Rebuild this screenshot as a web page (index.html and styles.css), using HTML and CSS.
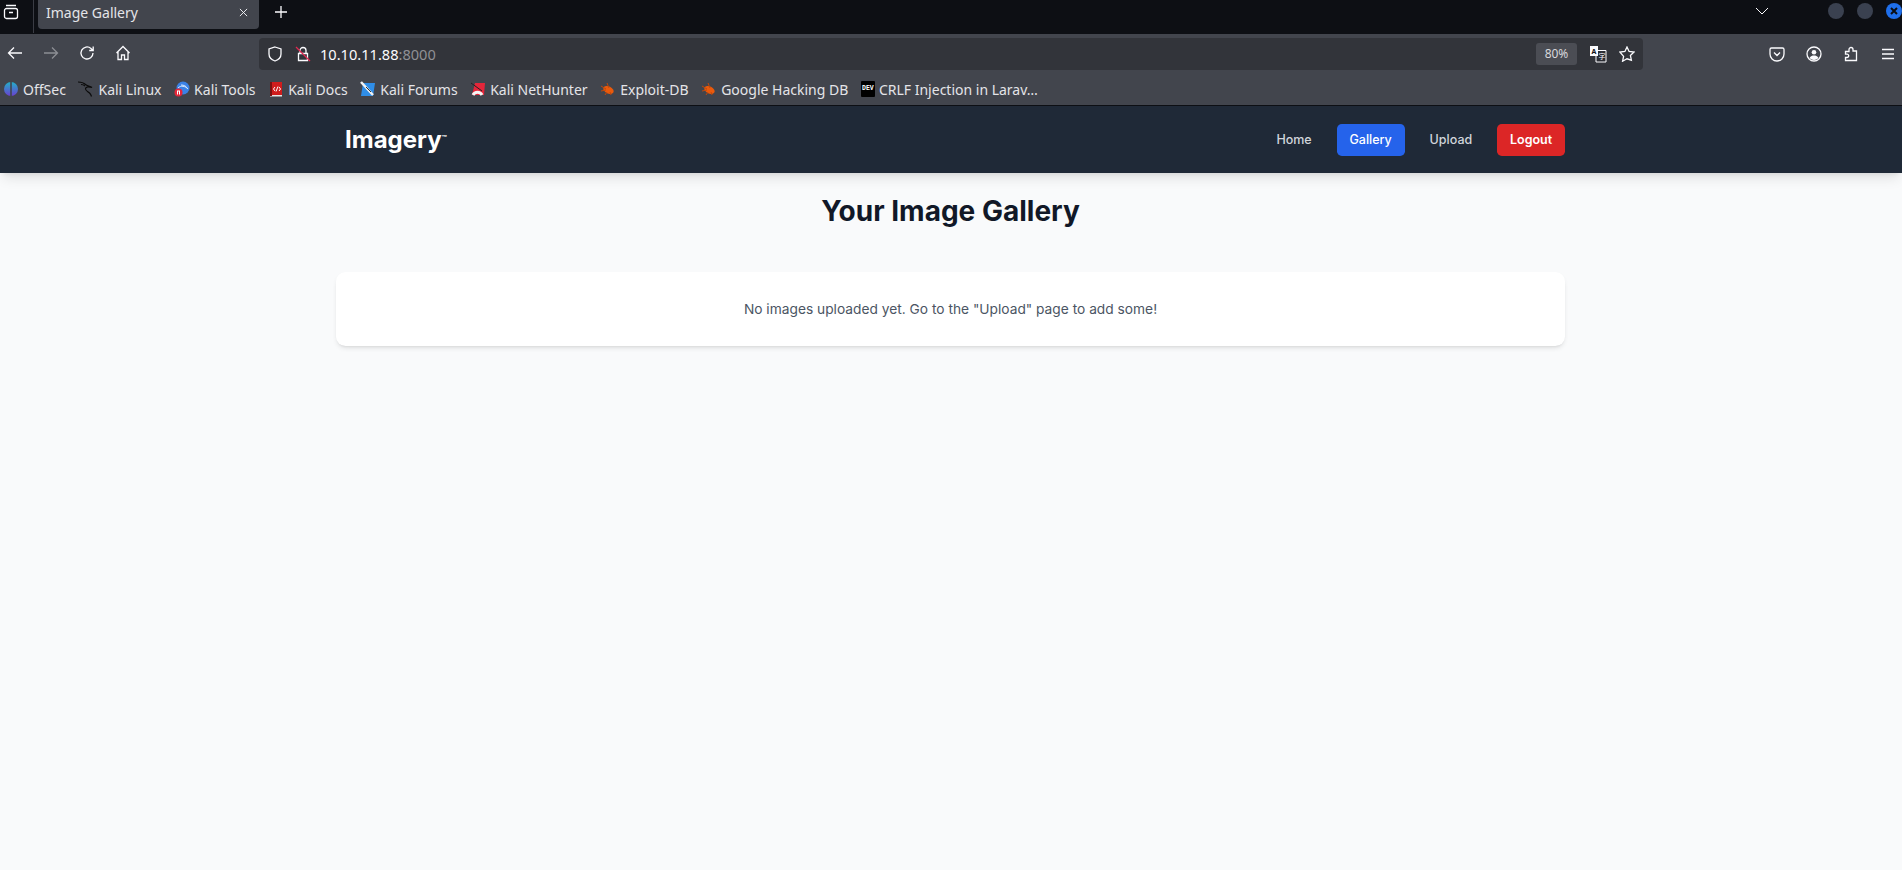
FILE: index.html
```html
<!DOCTYPE html>
<html>
  <head>
    <title>Image Gallery</title>
    <link rel="stylesheet" href="styles.css">
  </head>
  <body>
    <!-- Browser tab strip -->
    <div class="tabstrip">
      <svg class="ico tabs-btn" width="16" height="16" viewBox="0 0 16 16"><path d="M3 1.500h10M1.500 6.500a2 2 0 0 1 2-2h9a2 2 0 0 1 2 2v6a2 2 0 0 1-2 2h-9a2 2 0 0 1-2-2zM6 8.500h4"/></svg>
      <div class="tab-sep"></div>
      <div class="tab">
        <span class="tab-title">Image Gallery</span>
        <svg class="ico thin" width="9" height="9" viewBox="0 0 10 10"><path d="M1 1l8 8M9 1l-8 8"/></svg>
      </div>
      <svg class="ico new-tab" width="12" height="12" viewBox="0 0 12 12"><path d="M6 0v12M0 6h12"/></svg>
      <svg class="ico thin tab-list" width="14" height="8" viewBox="0 0 14 8"><path d="M1 1l6 6 6-6"/></svg>
      <span class="win-btn"></span>
      <span class="win-btn"></span>
      <span class="win-btn close">
        <svg class="win-x" width="8" height="8" viewBox="0 0 8 8"><path d="M1 1l6 6M7 1L1 7"/></svg>
      </span>
    </div>

    <!-- Browser toolbar -->
    <div class="toolbar">
      <svg class="ico nav-ico" width="16" height="16" viewBox="0 0 16 16"><path d="M15 8H1.500M7 2.500L1.500 8 7 13.500"/></svg>
      <svg class="ico nav-ico off" width="16" height="16" viewBox="0 0 16 16"><path d="M1 8h13.500M9 2.500L14.500 8 9 13.500"/></svg>
      <svg class="ico nav-ico" width="16" height="16" viewBox="0 0 16 16"><path d="M14 8a6 6 0 1 1-2-4.500L14 5.500M14.200 1.500v4h-4"/></svg>
      <svg class="ico nav-ico" width="16" height="16" viewBox="0 0 16 16"><path d="M1.500 8L8 1.500 14.500 8M3 7v7.500h3.500V10h3v4.500H13V7"/></svg>
      <div class="urlbar">
        <svg class="ico" width="16" height="16" viewBox="0 0 16 16"><path d="M8 1l6 2v5c0 3.500-3 6-6 7-3-1-6-3.500-6-7V3z"/></svg>
        <svg class="lock" width="16" height="16" viewBox="0 0 16 16"><path class="lock-body" d="M5 7V4.500a3 3 0 0 1 6 0V7M3.500 7.500h9v7h-9z"/><path class="lock-slash" d="M1 1l14 14"/></svg>
        <span class="url">10.10.11.88<span class="url-port">:8000</span></span>
        <span class="zoom-badge">80%</span>
        <svg width="18" height="18" viewBox="0 0 18 18" class="translate"><path d="M7 5.500h10V17H7z" fill="#2b2d33" stroke="#fbfbfe"/><path d="M1 1h8v10H1z" fill="#fbfbfe"/><text x="2.500" y="8.500" class="tr-a">A</text><text x="9.500" y="14" class="tr-b">字</text></svg>
        <svg class="ico" width="16" height="16" viewBox="0 0 16 16"><path d="M8 1l2.100 4.500 4.900.6-3.600 3.300 1 4.800L8 12.800l-4.400 2.400 1-4.800L1 6.100l4.900-.6z"/></svg>
      </div>
      <div class="tool-icons">
        <svg class="ico" width="16" height="16" viewBox="0 0 16 16"><path d="M2.500 2h11A1.500 1.500 0 0 1 15 3.500V8a7 7 0 0 1-14 0V3.500A1.500 1.500 0 0 1 2.500 2zM5 6.500l3 3 3-3"/></svg>
        <svg class="ico" width="16" height="16" viewBox="0 0 16 16"><circle cx="8" cy="8" r="7"/><circle class="solid" cx="8" cy="6.300" r="2.300"/><path class="solid" d="M3.500 12c1-2 3-2.500 4.500-2.500s3.500.5 4.500 2.500c-1.200 1.200-2.800 2-4.500 2s-3.300-.8-4.500-2z"/></svg>
        <svg class="ico" width="16" height="16" viewBox="0 0 16 16"><path d="M2.500 5.500h3.500V3.500a2 2 0 0 1 4 0v1.500h3.500v9.500h-11v-3h1.500a1.700 1.700 0 0 0 0-3.400H2.500z"/></svg>
        <svg class="ico" width="16" height="16" viewBox="0 0 16 16"><path d="M2 3.500h12M2 8h12M2 12.500h12"/></svg>
      </div>
    </div>

    <!-- Bookmarks toolbar -->
    <div class="bookmarks">
      <a class="bm">
        <svg width="16" height="16" viewBox="0 0 16 16"><defs><linearGradient id="offsec" x1="0" y1="0" x2="0" y2="1"><stop offset="0" stop-color="#22b0c8"/><stop offset="1" stop-color="#6a3fd0"/></linearGradient></defs><circle cx="8" cy="8" r="7" fill="url(#offsec)"/><path d="M7.200 1h1.600v14H7.200z" fill="#42454d"/></svg>
        OffSec
      </a>
      <a class="bm">
        <svg width="16" height="16" viewBox="0 0 16 16" fill="none" stroke="#0b0b0b" stroke-width="1.200"><path d="M0 1c3 0 6 1 7.500 2.500S12 5 14 6.500c-3-1-6-1-6.500 1s2.500 3 4 4.500 1.500 2 2 3.500"/><path d="M3 3.500c1.500 0 3 .5 4 1.500"/></svg>
        Kali Linux
      </a>
      <a class="bm">
        <svg width="16" height="16" viewBox="0 0 16 16"><circle cx="9" cy="7" r="6.500" fill="#3b82e6"/><path d="M4 7c3-3 7-2 10 1M7 4c3 0 5 1 6 3" fill="none" stroke="#dbeafe"/><circle cx="4.500" cy="11.500" r="4" fill="#e5263a"/><path d="M3 10h3M3.500 10v3.500M5.500 10v3.500" stroke="#fff"/></svg>
        Kali Tools
      </a>
      <a class="bm">
        <svg width="16" height="16" viewBox="0 0 16 16"><path d="M2 1h12v13H2z" fill="#d01c1c"/><path d="M2 14h12v1.500H2z" fill="#e5e5e5"/><path d="M2 1h2v14H2z" fill="#7a1010"/><path d="M7 6L5.500 8 7 10M11 6l1.500 2L11 10M10 5.500L8 10.500" stroke="#fff" fill="none"/></svg>
        Kali Docs
      </a>
      <a class="bm">
        <svg width="16" height="16" viewBox="0 0 16 16"><path d="M3 2h12l-2 13H1z" fill="#2f8ee8"/><path d="M1 1l12 13" stroke="#f2f2f2" stroke-width="2.500"/><path d="M6 6l5 5" stroke="#333"/></svg>
        Kali Forums
      </a>
      <a class="bm">
        <svg width="16" height="16" viewBox="0 0 16 16"><path d="M5 2h10l-1 12H2z" fill="#e5263a"/><path d="M3 14a5 5 0 0 1 9 0" fill="none" stroke="#f5f5f5" stroke-width="3"/><path d="M1 2l11 8" stroke="#222"/></svg>
        Kali NetHunter
      </a>
      <a class="bm">
        <svg width="16" height="16" viewBox="0 0 16 16"><ellipse cx="8.500" cy="9" rx="5.500" ry="3.500" fill="#ea5a0c" transform="rotate(25 8.500 9)"/><path d="M1 5l5 3M7 2l2 5M1 10l5-1M5 14l2-3M11 14l-1-3" stroke="#c2480a"/></svg>
        Exploit-DB
      </a>
      <a class="bm">
        <svg width="16" height="16" viewBox="0 0 16 16"><ellipse cx="8.500" cy="9" rx="5.500" ry="3.500" fill="#ea5a0c" transform="rotate(25 8.500 9)"/><path d="M1 5l5 3M7 2l2 5M1 10l5-1M5 14l2-3M11 14l-1-3" stroke="#c2480a"/></svg>
        Google Hacking DB
      </a>
      <a class="bm">
        <span class="dev-ico">DEV</span>
        CRLF Injection in Larav…
      </a>
    </div>

    <!-- Site header -->
    <header class="site-header">
      <div class="wrap header-row">
        <div class="brand">Imagery<span class="tm">™</span></div>
        <nav class="site-nav">
          <a class="nav-link">Home</a>
          <a class="nav-link active">Gallery</a>
          <a class="nav-link">Upload</a>
          <a class="nav-link logout">Logout</a>
        </nav>
      </div>
    </header>

    <main class="page">
      <div class="wrap">
        <h1>Your Image Gallery</h1>
        <div class="card">
          <p>No images uploaded yet. Go to the "Upload" page to add some!</p>
        </div>
      </div>
    </main>
  </body>
</html>
```

FILE: styles.css
```css
html,
body {
  height: 100%;
}

body {
  margin: 0;
  display: flex;
  flex-direction: column;
  overflow: hidden;
  background-color: #f9fafb;
  font-family: "Noto Sans", sans-serif;
}

/* Shared look of the browser icons */
.ico {
  flex: none;
  fill: none;
  stroke: #fbfbfe;
  stroke-width: 1.3;
}

.ico.thin {
  stroke-width: 1;
}

.ico .solid {
  fill: #fbfbfe;
  stroke: none;
}

/* Tab strip */
.tabstrip {
  height: 34px;
  flex: none;
  display: flex;
  align-items: flex-start;
  background-color: #0d0f14;
}

.tabs-btn {
  margin: 4px 0 0 3px;
}

.tab-sep {
  width: 1px;
  height: 33px;
  margin-left: 14px;
  background-color: #3a3c44;
}

.tab {
  width: 221px;
  height: 29px;
  margin-left: 4px;
  padding: 0 11px 5px 8px;
  box-sizing: border-box;
  display: flex;
  align-items: center;
  justify-content: space-between;
  background-color: #42454d;
  border-radius: 0 0 4px 4px;
}

.tab-title {
  color: #e4e4e8;
  font-size: 14px;
}

.new-tab {
  margin: 6px 0 0 16px;
}

.tab-list {
  margin: 7px 0 0 1468px;
}

.win-btn {
  width: 16px;
  height: 16px;
  flex: none;
  margin: 3px 0 0 13px;
  border-radius: 50%;
  background-color: #3a4150;
}

.tab-list + .win-btn {
  margin-left: 59px;
}

.win-btn.close {
  margin-right: -7px;
  display: flex;
  align-items: center;
  justify-content: center;
  background-color: #1f6feb;
}

.win-x {
  fill: none;
  stroke: #0b0d12;
  stroke-width: 2;
}

/* Navigation toolbar */
.toolbar {
  height: 36px;
  flex: none;
  padding-left: 7px;
  display: flex;
  align-items: center;
  gap: 20px;
  background-color: #42454d;
}

.nav-ico {
  margin-top: 2px;
}

.nav-ico.off {
  opacity: 0.4;
}

.urlbar {
  width: 1384px;
  height: 32px;
  margin: 4px 0 0 108px;
  padding: 0 8px;
  box-sizing: border-box;
  flex: none;
  display: flex;
  align-items: center;
  gap: 12px;
  background-color: #32343a;
  border-radius: 4px;
}

.lock {
  flex: none;
  fill: none;
}

.lock-body {
  stroke: #fbfbfe;
  stroke-width: 1.3;
}

.lock-slash {
  stroke: #e22850;
  stroke-width: 1.2;
}

.url {
  margin-left: -3px;
  color: #fbfbfe;
  font-size: 14.600px;
  flex: 1;
}

.url-port {
  color: #8f9095;
}

.zoom-badge {
  width: 41px;
  height: 22px;
  line-height: 22px;
  text-align: center;
  color: #d8d8dc;
  font-size: 12px;
  background-color: #4b4d54;
  border-radius: 3px;
}

.translate {
  flex: none;
}

.tr-a {
  font: bold 7px "Noto Sans", sans-serif;
  fill: #111;
}

.tr-b {
  font: 7px "Noto Sans CJK SC", sans-serif;
  fill: #fbfbfe;
}

.tool-icons {
  margin: 4px 0 0 106px;
  display: flex;
  gap: 21px;
}

/* Bookmarks */
.bookmarks {
  height: 36px;
  flex: none;
  padding: 3px 0 0 3px;
  box-sizing: border-box;
  display: flex;
  align-items: center;
  gap: 12.600px;
  background-color: #42454d;
  border-bottom: 1px solid #0d0f14;
}

.bm {
  display: flex;
  align-items: center;
  gap: 4px;
  color: #e4e4e8;
  font-size: 14px;
  white-space: nowrap;
}

.dev-ico {
  width: 14px;
  height: 16px;
  text-align: center;
  color: #fff;
  font: bold 6.500px/16px "Liberation Mono", monospace;
  background-color: #000;
  border-radius: 1px;
}

/* Site header */
.wrap {
  width: 1229px;
  margin-left: 336px;
}

.site-header {
  height: 67px;
  flex: none;
  position: relative;
  background-color: #1f2937;
  box-shadow: 0 8px 12px -3px rgba(0, 0, 0, 0.1), 0 3px 5px -3px rgba(0, 0, 0, 0.1);
}

.header-row {
  height: 100%;
  display: flex;
  align-items: center;
  justify-content: space-between;
}

.brand {
  margin-left: 9px;
  color: #fff;
  font: 700 24px Inter, sans-serif;
}

.tm {
  font-size: 8px;
  vertical-align: 7px;
}

.site-nav {
  display: flex;
  gap: 12.200px;
}

.nav-link {
  padding: 8px 12.800px;
  color: #d1d5db;
  font: 500 12.500px/16px Inter, sans-serif;
  border-radius: 4.800px;
}

.nav-link.active {
  color: #fff;
  background-color: #2563eb;
}

.nav-link.logout {
  color: #fff;
  font-weight: 600;
  background-color: #dc2626;
}

/* Page content */
.page {
  flex: 1;
}

h1 {
  margin: 16px 0 0;
  text-align: center;
  color: #111827;
  font: 700 28px/44px Inter, sans-serif;
}

.card {
  margin-top: 39px;
  height: 74px;
  display: flex;
  align-items: center;
  justify-content: center;
  background-color: #fff;
  border-radius: 9.600px;
  box-shadow: 0 3px 5px -1px rgba(0, 0, 0, 0.1), 0 2px 3px -2px rgba(0, 0, 0, 0.1);
}

.card p {
  margin: 0;
  color: #4b5563;
  font: 400 13.750px Inter, sans-serif;
}
```
